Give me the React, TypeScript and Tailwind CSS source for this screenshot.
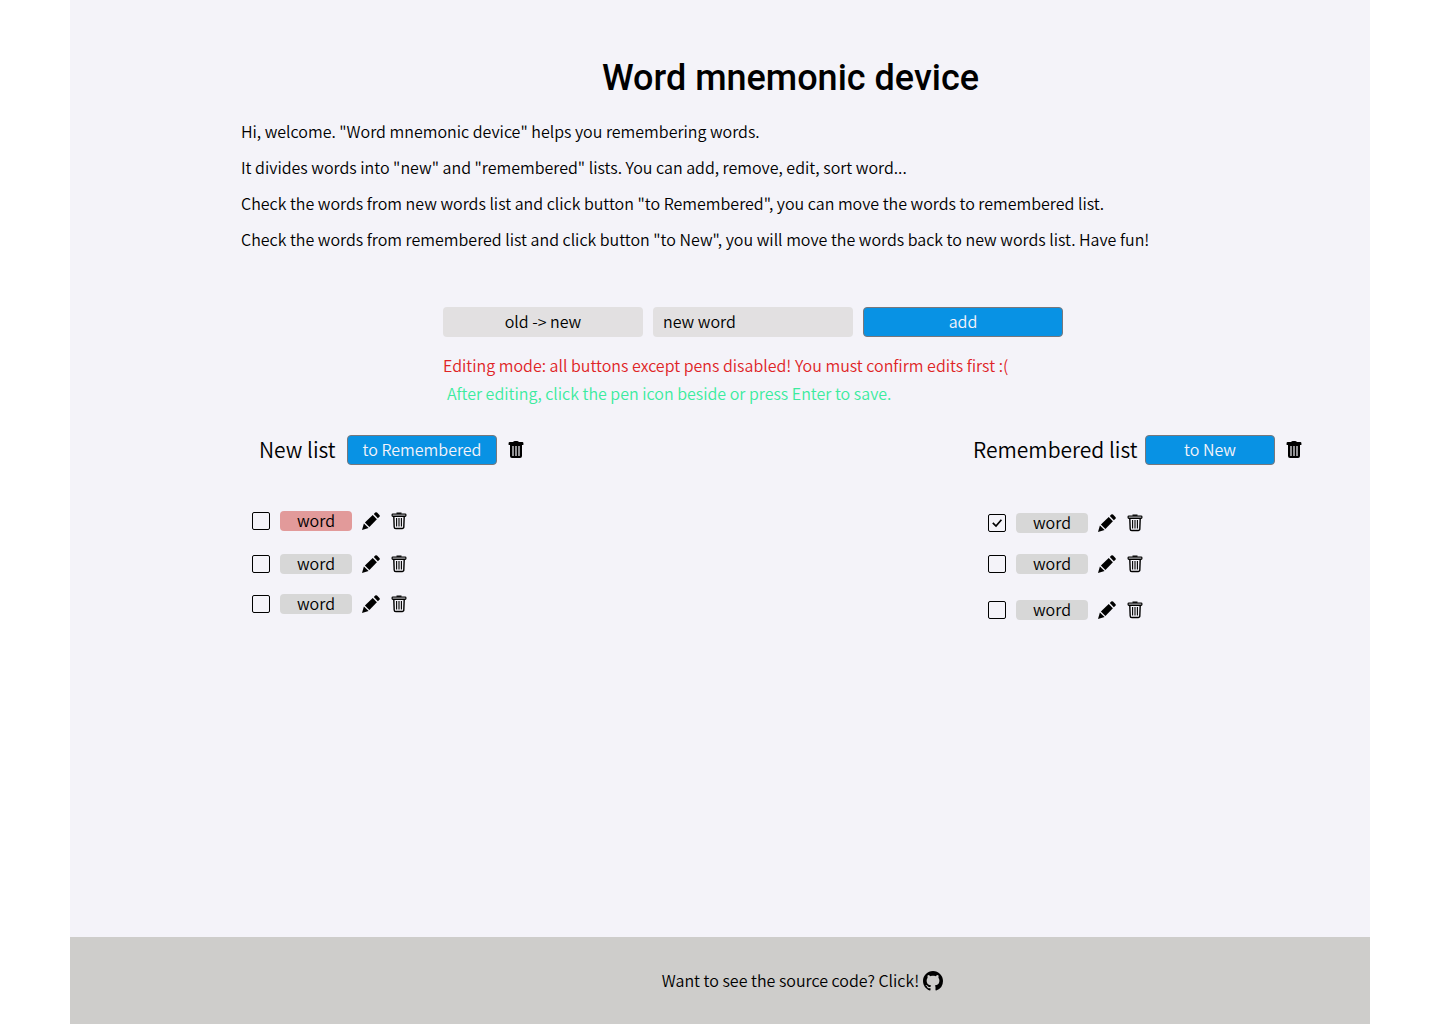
import { useState } from "react";

type WordItem = { id: string; text: string; checked: boolean; editing: boolean; spacing: string };

const newWords: WordItem[] = [
  { id: "new-1", text: "word", checked: false, editing: true, spacing: "" },
  { id: "new-2", text: "word", checked: false, editing: false, spacing: "mt-[23px]" },
  { id: "new-3", text: "word", checked: false, editing: false, spacing: "mt-5" },
];

const rememberedWords: WordItem[] = [
  { id: "rem-1", text: "word", checked: true, editing: false, spacing: "" },
  { id: "rem-2", text: "word", checked: false, editing: false, spacing: "mt-[21px]" },
  { id: "rem-3", text: "word", checked: false, editing: false, spacing: "mt-[26px]" },
];

function PencilIcon() {
  return (
    <svg viewBox="0 0 18 18" className="size-[18px]" fill="currentColor" aria-hidden="true">
      <path d="M0 18 L1.9 11.4 L6.6 16.1 Z" />
      <path d="M2.9 10.4 L10.7 3.1 L14.9 7.3 L7.4 14.9 Z" />
      <path d="M11.8 2.1 L13.2 0.6 a1.3 1.3 0 0 1 1.8 0 L17.4 3 a1.3 1.3 0 0 1 0 1.8 L15.9 6.2 Z" />
    </svg>
  );
}

function TrashOutlineIcon() {
  return (
    <svg viewBox="0 0 16 18" className="h-[18px] w-4" fill="none" stroke="currentColor" aria-hidden="true">
      <path d="M5.5 1.2 h5" strokeWidth="1.4" />
      <rect x="1.1" y="2" width="13.8" height="2.3" rx="0.8" strokeWidth="1.2" fill="#a5a5a8" />
      <path d="M2.8 4.6 L3.2 14.9 a1.6 1.6 0 0 0 1.6 1.6 h6.4 a1.6 1.6 0 0 0 1.6 -1.6 L13.2 4.6" strokeWidth="1.4" />
      <path d="M5.6 6 v8.6 M8 6 v8.6 M10.4 6 v8.6" strokeWidth="1.1" />
    </svg>
  );
}

function TrashSolidIcon() {
  return (
    <svg viewBox="0 0 16 18" className="h-[18px] w-4" fill="currentColor" fillRule="evenodd" aria-hidden="true">
      <path d="M5.2 1 C5.4 0.2 6.2 0 8 0 s2.6 0.2 2.8 1 H14.3 a1.1 1.1 0 0 1 1.1 1.1 V4 H0.6 V2.1 a1.1 1.1 0 0 1 1.1 -1.1 Z" />
      <path d="M2 4 H14 V15 a2 2 0 0 1 -2 2 H4 a2 2 0 0 1 -2 -2 Z M4.4 5 V15 H5.6 V5 Z M7.4 5 V15 H8.6 V5 Z M10.4 5 V15 H11.6 V5 Z" />
    </svg>
  );
}

function GithubIcon() {
  return (
    <svg viewBox="0 0 16 16" className="size-5" fill="currentColor" aria-hidden="true">
      <path d="M8 0C3.58 0 0 3.58 0 8c0 3.54 2.29 6.53 5.47 7.59.4.07.55-.17.55-.38 0-.19-.01-.82-.01-1.49-2.01.37-2.53-.49-2.69-.94-.09-.23-.48-.94-.82-1.13-.28-.15-.68-.52-.01-.53.63-.01 1.08.58 1.23.82.72 1.21 1.87.87 2.33.66.07-.52.28-.87.51-1.07-1.78-.2-3.64-.89-3.64-3.95 0-.87.31-1.59.82-2.15-.08-.2-.36-1.02.08-2.12 0 0 .67-.21 2.2.82.64-.18 1.32-.27 2-.27s1.36.09 2 .27c1.53-1.04 2.2-.82 2.2-.82.44 1.1.16 1.92.08 2.12.51.56.82 1.27.82 2.15 0 3.07-1.87 3.75-3.65 3.95.29.25.54.73.54 1.48 0 1.07-.01 1.93-.01 2.2 0 .21.15.46.55.38A8.01 8.01 0 0 0 16 8c0-4.42-3.58-8-8-8z" />
    </svg>
  );
}

function WordRow({ item }: { item: WordItem }) {
  const [checked, setChecked] = useState(item.checked);
  const [text, setText] = useState(item.text);
  return (
    <li className={`flex h-5 items-center ${item.spacing}`}>
      <span className="relative flex size-[18px]">
        <input
          type="checkbox"
          aria-label={`Select ${item.id}`}
          checked={checked}
          onChange={(e) => setChecked(e.target.checked)}
          className="size-[18px] appearance-none rounded-xs border border-black"
        />
        {checked && (
          <svg viewBox="0 0 18 18" className="pointer-events-none absolute inset-0" fill="none" stroke="black" strokeWidth="1.7" aria-hidden="true">
            <path d="M4.8 8.8 L8 12 L13.4 5.8" />
          </svg>
        )}
      </span>
      <input
        type="text"
        aria-label={`Text of ${item.id}`}
        value={text}
        readOnly={!item.editing}
        onChange={(e) => setText(e.target.value)}
        className={`ml-2.5 h-5 w-[72px] rounded-sm pb-0.5 text-center leading-[18px] ${item.editing ? "bg-[#e29a9a]" : "bg-[#d7d7d7]"}`}
      />
      <button type="button" aria-label="Edit word" className="ml-2.5">
        <PencilIcon />
      </button>
      <button type="button" aria-label="Delete word" className="ml-[11px]">
        <TrashOutlineIcon />
      </button>
    </li>
  );
}

const blueButton = "h-[30px] rounded-sm border border-[#77777c] bg-[#0892e4] pb-0.5 leading-6 text-[#f4f3f9]";

export default function App() {
  const [word, setWord] = useState("new word");
  return (
    <div className="mx-auto flex min-h-screen max-w-[1300px] flex-col bg-[#f4f3f9] font-['Noto_Sans_CJK_SC','Lato',sans-serif] text-base font-[350] text-black">
      <main className="flex-1 pt-[57px] pr-[30px] pl-[171px]">
        <h1 className="text-center font-['Roboto',sans-serif] text-4xl leading-[42px] font-medium">Word mnemonic device</h1>
        <div className="mt-3.5 leading-9">
          <p>Hi, welcome. "Word mnemonic device" helps you remembering words.</p>
          <p>It divides words into "new" and "remembered" lists. You can add, remove, edit, sort word...</p>
          <p>Check the words from new words list and click button "to Remembered", you can move the words to remembered list.</p>
          <p>Check the words from remembered list and click button "to New", you will move the words back to new words list. Have fun!</p>
        </div>

        <form className="mt-[50px] ml-[202px] flex gap-2.5" onSubmit={(e) => e.preventDefault()}>
          <select aria-label="Sort order" className="h-[30px] w-[200px] appearance-none rounded-sm bg-[#e2e0e1] pb-0.5 [text-align-last:center]">
            <option>old -&gt; new</option>
            <option>new -&gt; old</option>
          </select>
          <input
            type="text"
            aria-label="New word"
            value={word}
            onChange={(e) => setWord(e.target.value)}
            className="h-[30px] w-[200px] rounded-sm bg-[#e2e0e1] px-2.5 pb-0.5 leading-7"
          />
          <button type="submit" className={`${blueButton} w-[200px]`}>add</button>
        </form>

        <div className="mt-3.5 ml-[202px] leading-7">
          <p className="text-[#df2426]">Editing mode: all buttons except pens disabled! You must confirm edits first :(</p>
          <p className="pl-1 text-[#3ceb9e]">After editing, click the pen icon beside or press Enter to save.</p>
        </div>

        <div className="mt-7 flex justify-between pr-[38px] pl-[11px]">
          <section>
            <div className="flex items-center pl-[7px]">
              <h2 className="w-[88px] pb-0.5 text-[21px] leading-7 whitespace-nowrap">New list</h2>
              <button type="button" className={`${blueButton} w-[150px]`}>to Remembered</button>
              <button type="button" aria-label="Clear new list" className="ml-[11px]">
                <TrashSolidIcon />
              </button>
            </div>
            <ul className="mt-[46px]">
              {newWords.map((item) => <WordRow key={item.id} item={item} />)}
            </ul>
          </section>
          <section>
            <div className="flex items-center">
              <h2 className="w-[172px] pb-0.5 text-[21px] leading-7 whitespace-nowrap">Remembered list</h2>
              <button type="button" className={`${blueButton} w-[130px]`}>to New</button>
              <button type="button" aria-label="Clear remembered list" className="ml-[11px]">
                <TrashSolidIcon />
              </button>
            </div>
            <ul className="mt-12 pl-[15px]">
              {rememberedWords.map((item) => <WordRow key={item.id} item={item} />)}
            </ul>
          </section>
        </div>
      </main>
      <footer className="flex h-[87px] items-center justify-center gap-1 bg-[#cecdcb] pl-[165px]">
        <span className="pb-0.5">Want to see the source code? Click!</span>
        <a href="#source" aria-label="Source code on GitHub">
          <GithubIcon />
        </a>
      </footer>
    </div>
  );
}
